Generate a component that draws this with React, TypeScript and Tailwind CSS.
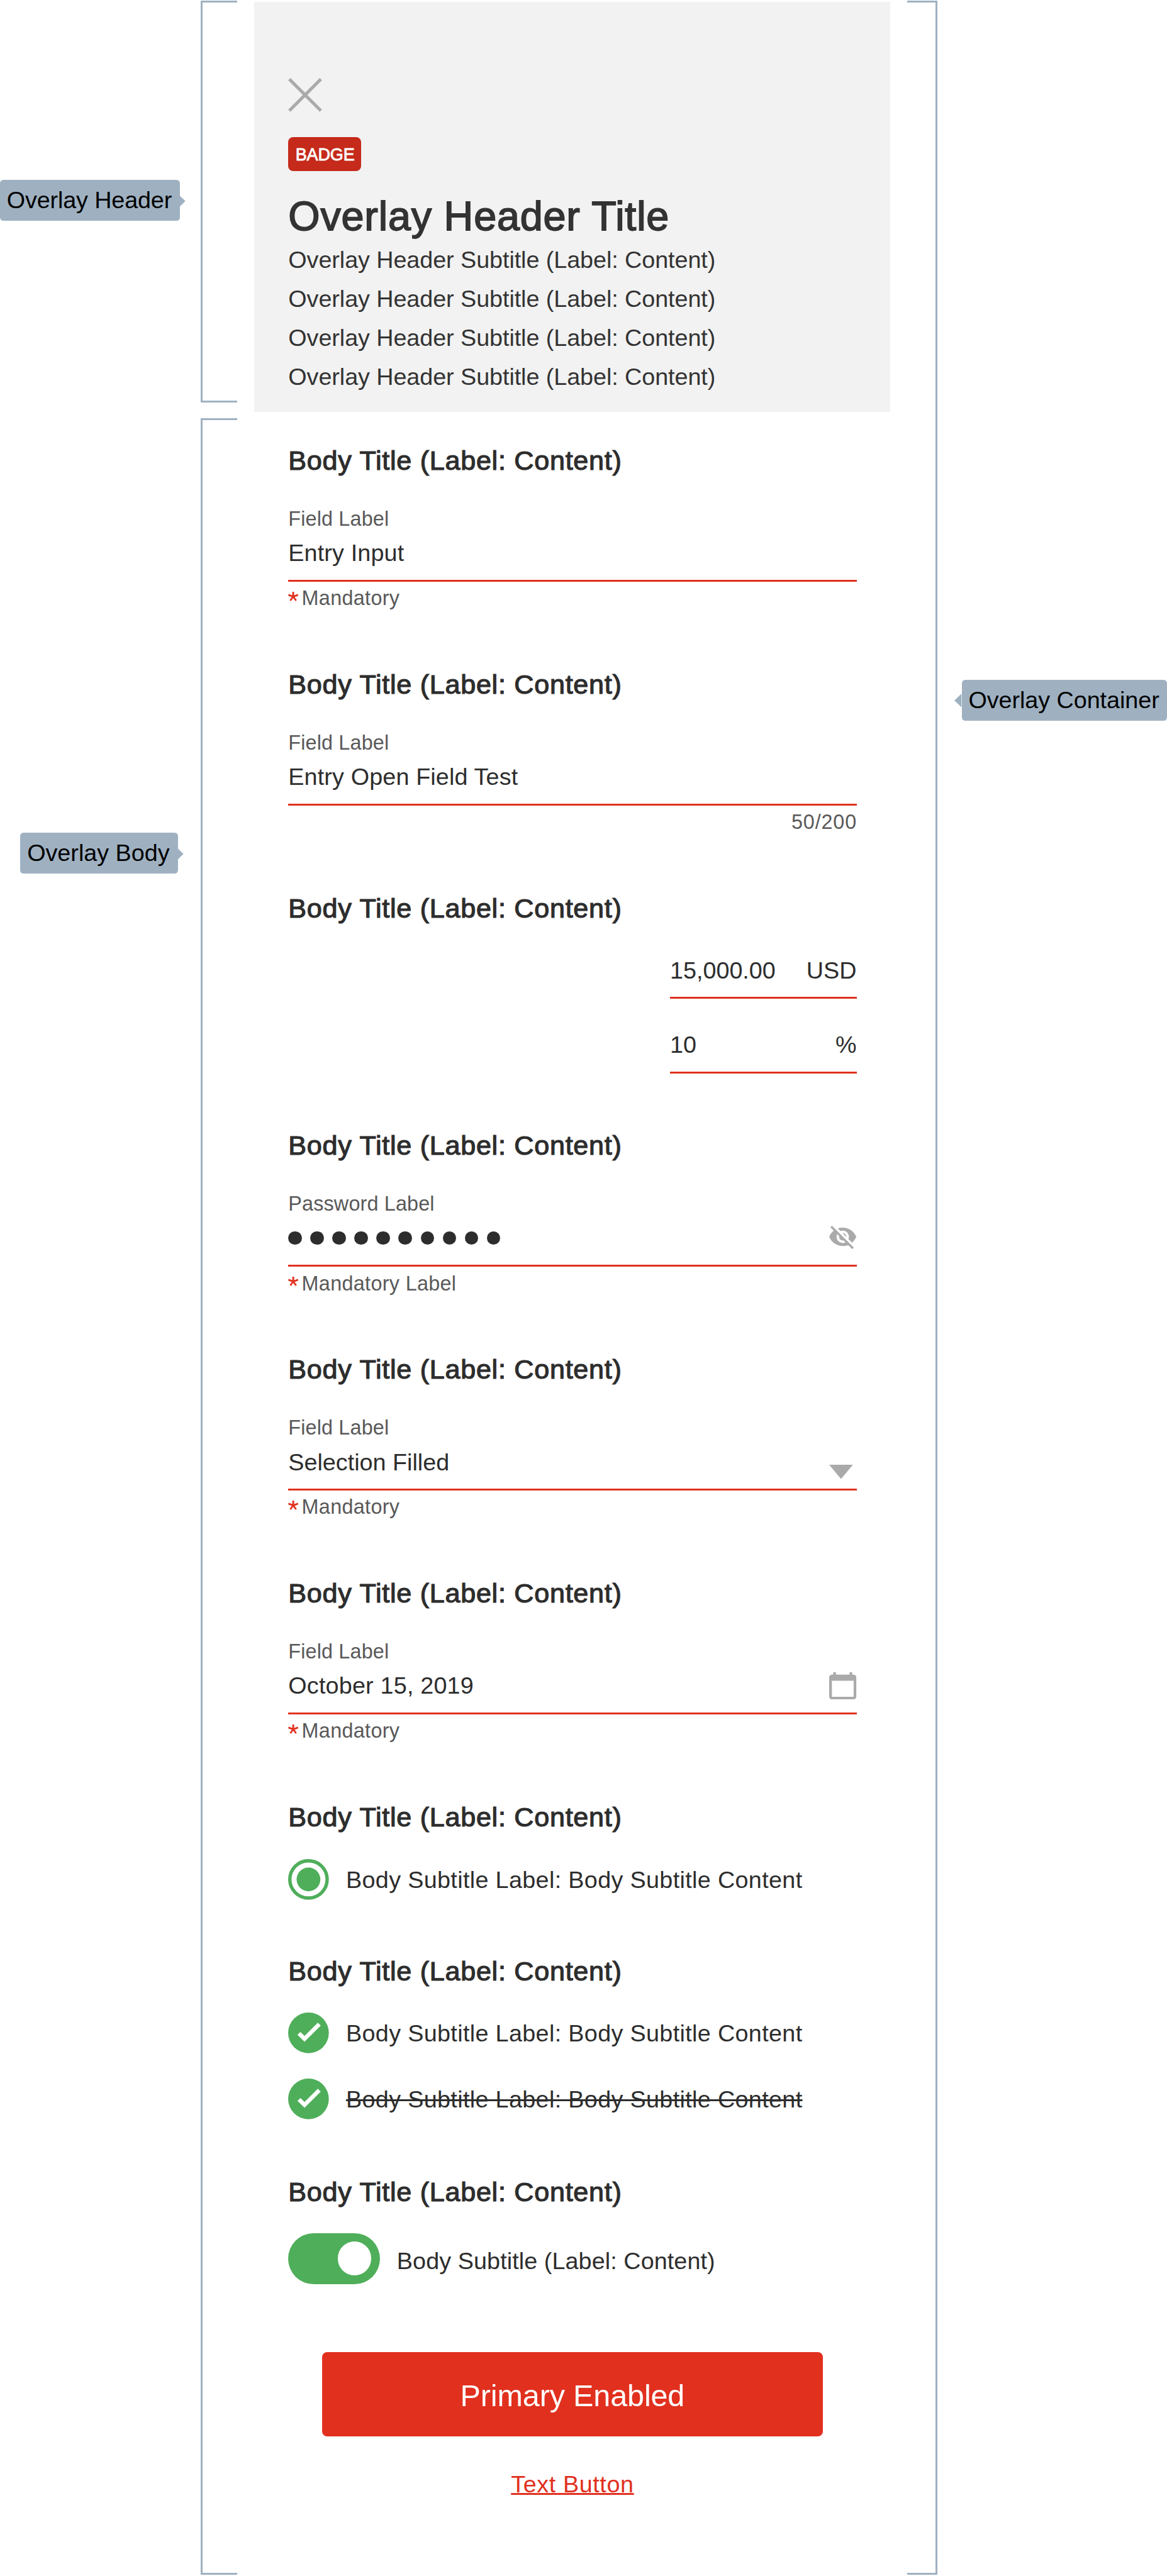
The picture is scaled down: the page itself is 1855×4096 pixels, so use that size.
import React from "react";

const BODY_TITLE = "Body Title (Label: Content)";

function Tag({ children, arrow, className = "" }: { children: React.ReactNode; arrow: "left" | "right"; className?: string }) {
  return (
    <div className={`relative h-6 rounded-[2px] bg-[#9fb1c1] pl-1 text-sm leading-6 text-black whitespace-nowrap ${className}`}>
      {children}
      {arrow === "right" ? (
        <svg className="absolute left-full top-[8.5px] h-[8px] w-[3.5px]" viewBox="0 0 3.5 8" preserveAspectRatio="none">
          <path d="M0 0.9 3.2 4 0 7.1Z" fill="#9fb1c1" />
        </svg>
      ) : (
        <svg className="absolute right-full top-[8px] h-[8px] w-[4.2px]" viewBox="0 0 4.2 8" preserveAspectRatio="none">
          <path d="M4.2 0 0 4 4.2 8Z" fill="#9fb1c1" />
        </svg>
      )}
    </div>
  );
}

function Section({ className = "", children }: { className?: string; children: React.ReactNode }) {
  return (
    <section className={`flex flex-col px-5 pt-[16.6px] ${className}`}>
      <h2 className="text-base leading-6 tracking-[0.27px] [-webkit-text-stroke:0.45px_#2d2d2d]">{BODY_TITLE}</h2>
      {children}
    </section>
  );
}

function Field({ label, value, icon, hint, count }: { label: string; value: React.ReactNode; icon?: React.ReactNode; hint?: string; count?: string }) {
  return (
    <div className="mt-[14.54px] flex flex-col">
      <label className="text-xs leading-4 tracking-[0.06px] text-[#595959]">{label}</label>
      <div className="mt-[2.01px] flex h-5 items-center justify-between text-sm leading-5">
        {value}
        {icon}
      </div>
      <div className="mt-[5.8px] h-[1.12px] bg-[#e1301e]" />
      {hint && (
        <p className="mt-[2px] flex text-xs leading-4 tracking-[0.12px] text-[#595959]">
          <svg className="mr-[1.7px] mt-[4px] h-[5.4px] w-[6.2px]" viewBox="0 0 6.2 5.4">
            <path d="M3 2.8V0M3 2.8 0.15 1.8M3 2.8 5.85 1.8M3 2.8 1.3 5.2M3 2.8 4.7 5.2" stroke="#e1301e" strokeWidth="1.05" fill="none" />
          </svg>
          {hint}
        </p>
      )}
      {count && <p className="mt-[2px] -mr-[0.2px] text-right text-xs leading-4 tracking-[0.32px] text-[#595959]">{count}</p>}
    </div>
  );
}

function Amount({ value, unit, className }: { value: string; unit: string; className: string }) {
  return (
    <div className={`w-[110px] self-end ${className}`}>
      <div className="flex h-5 justify-between pt-[0.3px] text-sm leading-5">
        <span>{value}</span>
        <span>{unit}</span>
      </div>
      <div className="mt-[5.8px] h-[1.12px] bg-[#e1301e]" />
    </div>
  );
}

function CheckCircle() {
  return (
    <svg className="size-6 shrink-0" viewBox="0 0 24 24">
      <circle cx="12" cy="12" r="12" fill="#4fae5a" />
      <path d="M5.5 13.2 7.25 11.5 9.67 13.85 17.5 6 19.25 7.7 9.67 17.25Z" fill="#fff" />
    </svg>
  );
}

function EyeOff() {
  return (
    <svg className="mb-[0.6px] h-[13.8px] w-4" viewBox="1 3 22 19" preserveAspectRatio="none" fill="#aaaaaa">
      <path d="M12 7c2.76 0 5 2.24 5 5 0 .65-.13 1.26-.36 1.83l2.92 2.92c1.51-1.26 2.7-2.89 3.43-4.75-1.73-4.39-6-7.5-11-7.5-1.4 0-2.74.25-3.98.7l2.16 2.16C10.74 7.13 11.35 7 12 7zM2 4.27l2.28 2.28.46.46C3.08 8.3 1.78 10.02 1 12c1.73 4.39 6 7.5 11 7.5 1.55 0 3.03-.3 4.38-.84l.42.42L19.73 22 21 20.73 3.27 3 2 4.27zM7.53 9.8l1.55 1.55c-.05.21-.08.43-.08.65 0 1.66 1.34 3 3 3 .22 0 .44-.03.65-.08l1.55 1.55c-.67.33-1.41.53-2.2.53-2.76 0-5-2.24-5-5 0-.79.2-1.53.53-2.2zm4.31-.78l3.15 3.15.02-.16c0-1.66-1.34-3-3-3l-.17.01z" />
    </svg>
  );
}

function Calendar() {
  return (
    <svg className="size-4" viewBox="0 0 16 16">
      <path fill="#aaaaaa" fillRule="evenodd" d="M2.4 0H4V1.42H12V0H13.6V1.42H14.4A1.6 1.6 0 0 1 16 3.02V14.4A1.6 1.6 0 0 1 14.4 16H1.6A1.6 1.6 0 0 1 0 14.4V3.02A1.6 1.6 0 0 1 1.6 1.42H2.4ZM1.6 5V14.5H14.45V5Z" />
    </svg>
  );
}

export default function App() {
  return (
    <div className="flex h-[1519px] w-[688px] overflow-hidden bg-white font-['Liberation_Sans',Arial,sans-serif] text-[#2d2d2d] [zoom:2.6962]">
      <aside className="flex w-[118.5px] flex-col pt-[106px]">
        <Tag arrow="right" className="w-[106px] tracking-[-0.05px]">Overlay Header</Tag>
        <Tag arrow="right" className="ml-3 mt-[361px] w-[93px]">Overlay Body</Tag>
      </aside>
      <div className="flex w-[21.5px] flex-col pt-[0.5px]">
        <div className="h-[237px] border-y-[1.12px] border-l-[1.12px] border-[#9fb1c1]" />
        <div className="mt-[9px] h-[1272px] border-y-[1.12px] border-l-[1.12px] border-[#9fb1c1]" />
      </div>

      <main className="mx-[10px] w-[375px] pt-px">
        <header className="flex h-[242px] flex-col items-start bg-[#f2f2f2] px-5 pt-[45px] text-[#333333]">
          <svg className="size-5" viewBox="0 0 20 20">
            <path d="M0.7 0.7 19.3 19.3M19.3 0.7 0.7 19.3" stroke="#aaaaaa" strokeWidth="1.9" />
          </svg>
          <span className="mt-[15px] h-5 w-[43px] rounded-[3px] bg-[#c52a1a] pl-[0.3px] text-center text-[10px] leading-[21.3px] tracking-[-0.04px] text-white [-webkit-text-stroke:0.32px_#fff]">BADGE</span>
          <h1 className="mt-[12.65px] text-2xl leading-7 tracking-[0.3px] [-webkit-text-stroke:0.65px_#333333]">Overlay Header Title</h1>
          {[1, 2, 3, 4].map((n) => (
            <p key={n} className="text-sm leading-[23px] tracking-[-0.025px]">Overlay Header Subtitle (Label: Content)</p>
          ))}
        </header>

        <Section className="h-[132px]">
          <Field label="Field Label" value={<span className="pt-[0.8px] tracking-[0.05px]">Entry Input</span>} hint="Mandatory" />
        </Section>
        <Section className="h-[132px]">
          <Field label="Field Label" value={<span className="pt-[0.8px] tracking-[0.05px]">Entry Open Field Test</span>} count="50/200" />
        </Section>
        <Section className="h-[140px]">
          <Amount value="15,000.00" unit="USD" className="mt-[14.6px]" />
          <Amount value="10" unit="%" className="mt-[17.08px]" />
        </Section>
        <Section className="h-[132px]">
          <Field
            label="Password Label"
            value={
              <div className="flex gap-[5px]">
                {Array.from({ length: 10 }, (_, i) => (
                  <span key={i} className="size-2 rounded-full bg-[#2d2d2d]" />
                ))}
              </div>
            }
            icon={<EyeOff />}
            hint="Mandatory Label"
          />
        </Section>
        <Section className="h-[132px]">
          <Field
            label="Field Label"
            value={<span className="pt-[0.8px]">Selection Filled</span>}
            icon={
              <svg className="mr-[2px] h-[8.4px] w-[14px] self-end" viewBox="0 0 14 8.4">
                <path d="M0 0H14L7 8.4Z" fill="#aaaaaa" />
              </svg>
            }
            hint="Mandatory"
          />
        </Section>
        <Section className="h-[132px]">
          <Field label="Field Label" value={<span className="pt-[0.8px] tracking-[0.07px]">October 15, 2019</span>} icon={<Calendar />} hint="Mandatory" />
        </Section>

        <Section className="h-[91px]">
          <div className="mt-[12.4px] flex items-center gap-[10px] text-sm leading-6 tracking-[0.127px]">
            <svg className="size-6" viewBox="0 0 24 24">
              <circle cx="12" cy="12" r="11" stroke="#4fae5a" strokeWidth="2" fill="none" />
              <circle cx="12" cy="12" r="7" fill="#4fae5a" />
            </svg>
            <span className="pt-[0.7px]">Body Subtitle Label: Body Subtitle Content</span>
          </div>
        </Section>
        <Section className="h-[130px]">
          <div className="mt-[12.4px] flex flex-col gap-[15px] text-sm leading-6 tracking-[0.127px]">
            <div className="flex h-6 items-center gap-[10px]">
              <CheckCircle />
              <span className="pt-[0.7px]">Body Subtitle Label: Body Subtitle Content</span>
            </div>
            <div className="flex h-6 items-center gap-[10px]">
              <CheckCircle />
              <span className="pt-[0.7px] line-through decoration-[1px]">Body Subtitle Label: Body Subtitle Content</span>
            </div>
          </div>
        </Section>
        <Section className="h-[83px]">
          <div className="mt-[12.4px] flex items-center gap-[10px] text-sm leading-5 tracking-[0.03px]">
            <div className="flex h-[30px] w-[54px] items-center justify-end rounded-full bg-[#4fae5a] pr-[5px]">
              <div className="size-5 rounded-full bg-white" />
            </div>
            <span className="pt-[3.2px]">Body Subtitle (Label: Content)</span>
          </div>
        </Section>

        <div className="mt-10 flex flex-col items-center">
          <button className="h-[50px] w-[295px] rounded-[3px] bg-[#e1301e] pt-[1.5px] text-lg leading-6 tracking-[-0.05px] text-white">Primary Enabled</button>
          <button className="mt-[18.6px] text-sm leading-5 tracking-[0.22px] text-[#e1301e] underline decoration-[1px] underline-offset-[0.5px] [text-decoration-skip-ink:none]">Text Button</button>
        </div>
      </main>

      <div className="mt-[0.5px] h-[1518px] w-[17.5px] border-y-[1.12px] border-r-[1.12px] border-[#9fb1c1]" />
      <aside className="ml-[14.5px] flex w-[121px] flex-col pt-[401px]">
        <Tag arrow="left" className="w-[121px] tracking-[-0.02px]">Overlay Container</Tag>
      </aside>
    </div>
  );
}
